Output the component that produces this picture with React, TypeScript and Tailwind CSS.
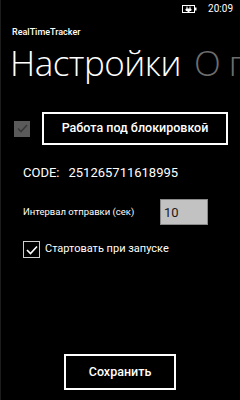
import React, { useState } from "react";

const titleFont = { fontFamily: '"Open Sans", "Noto Sans", sans-serif' };
const font = { fontFamily: 'Roboto, "Noto Sans", sans-serif' };

function Battery() {
  return (
    <svg width="16" height="8" viewBox="0 0 16 8" className="block">
      <rect x="0.5" y="0.5" width="12" height="7" fill="none" stroke="#fff" strokeWidth="1" />
      <rect x="13" y="2.5" width="1.5" height="3" fill="#fff" />
      <path d="M5 1.5 V4 M8 1.5 V4 M4 4 H9 V5.5 H7 V7 H6 V5.5 H4 Z" stroke="#fff" strokeWidth="1" fill="#fff" />
    </svg>
  );
}

export default function App() {
  const [lockMode] = useState(true);
  const [autostart, setAutostart] = useState(true);
  const [interval, setInterval] = useState("10");

  return (
    <div
      className="w-[240px] h-[400px] bg-black text-white overflow-hidden flex flex-col border-l border-[#1c1c1c]"
      style={font}
    >
      {/* status bar */}
      <div className="flex justify-end items-center gap-[10px] pr-[7px] pt-[4px] h-[14px]">
        <Battery />
        <span className="text-[10px] leading-none">20:09</span>
      </div>

      <div className="pl-[11px] pt-[14px] text-[9px] leading-none font-medium">RealTimeTracker</div>

      {/* pivot header */}
      <div
        className="pl-[9px] mt-[6px] whitespace-nowrap text-[35px] leading-[40px] font-light tracking-[-0.5px]"
        style={titleFont}
      >
        <span>Настройки</span>
        <span className="ml-[13px] text-[#6e6e6e]">О п</span>
      </div>

      {/* lock mode row */}
      <div className="flex items-center mt-[29px] pl-[13px]">
        <div className="w-[16px] h-[16px] bg-[#5a5a5a] flex items-center justify-center">
          {lockMode && (
            <svg width="11" height="9" viewBox="0 0 11 9">
              <path d="M1 4.5 L4 7.5 L10 1" fill="none" stroke="#383838" strokeWidth="1.6" />
            </svg>
          )}
        </div>
        <button className="ml-[12px] w-[186px] h-[33px] border-2 border-white text-[12.5px] font-medium flex items-center justify-center">
          Работа под блокировкой
        </button>
      </div>

      {/* code */}
      <div className="pl-[22px] mt-[21px] text-[13px] leading-none flex gap-[9px]">
        <span>CODE:</span>
        <span>251265711618995</span>
      </div>

      {/* interval */}
      <div className="flex items-center pl-[22px] mt-[20px]">
        <span className="text-[9.5px] w-[137px]">Интервал отправки (сек)</span>
        <input
          className="w-[48px] h-[26px] bg-[#c2c2c2] border border-[#8a8a8a] text-[#1a1a1a] text-[13px] pl-[3px] outline-none"
          style={font}
          value={interval}
          onChange={(e) => setInterval(e.target.value)}
        />
      </div>

      {/* autostart */}
      <label className="flex items-center pl-[22px] mt-[16px] cursor-pointer">
        <span
          className="w-[17px] h-[17px] border border-[#cfcfcf] bg-black flex items-center justify-center"
          onClick={() => setAutostart(!autostart)}
        >
          {autostart && (
            <svg width="12" height="10" viewBox="0 0 12 10">
              <path d="M1 5 L4.5 8.5 L11 1.5" fill="none" stroke="#fff" strokeWidth="1.6" />
            </svg>
          )}
        </span>
        <span className="ml-[5px] text-[11px]">Стартовать при запуске</span>
      </label>

      <div className="flex-1" />

      {/* save */}
      <div className="flex justify-center pb-[10px] pr-[1px]">
        <button className="w-[112px] h-[36px] border-2 border-white text-[12.5px] font-medium">Сохранить</button>
      </div>
    </div>
  );
}
